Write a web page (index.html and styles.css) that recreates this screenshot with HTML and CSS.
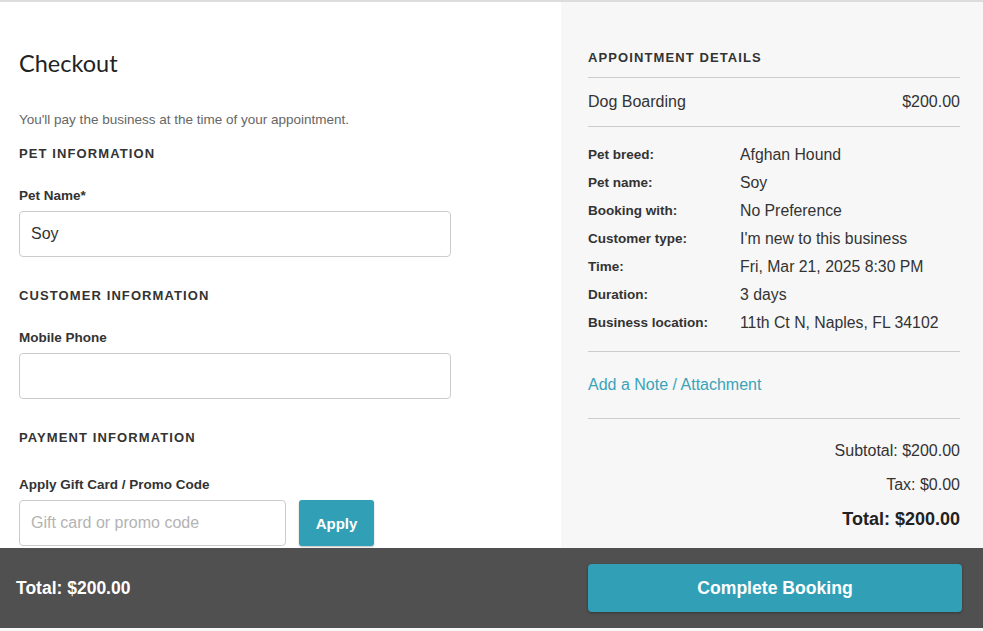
FILE: index.html
```html
<!DOCTYPE html>
<html lang="en">
<head>
<meta charset="utf-8">
<title>Checkout</title>
<link rel="stylesheet" href="styles.css">
</head>
<body>
<div class="page">
  <main class="main">
    <section class="form-col">
      <h1 class="title">Checkout</h1>
      <p class="note">You'll pay the business at the time of your appointment.</p>

      <h2 class="section-head first">PET INFORMATION</h2>
      <label class="field-label">Pet Name*</label>
      <div class="input wide"><span class="input-value">Soy</span></div>

      <h2 class="section-head">CUSTOMER INFORMATION</h2>
      <label class="field-label">Mobile Phone</label>
      <div class="input wide"></div>

      <h2 class="section-head">PAYMENT INFORMATION</h2>
      <label class="field-label promo-label">Apply Gift Card / Promo Code</label>
      <div class="promo-row">
        <div class="input promo"><span class="placeholder">Gift card or promo code</span></div>
        <button class="apply-btn">Apply</button>
      </div>
    </section>

    <aside class="summary-col">
      <h2 class="summary-head">APPOINTMENT DETAILS</h2>
      <div class="service-row">
        <span>Dog Boarding</span>
        <span>$200.00</span>
      </div>
      <dl class="details">
        <div class="detail"><dt>Pet breed:</dt><dd>Afghan Hound</dd></div>
        <div class="detail"><dt>Pet name:</dt><dd>Soy</dd></div>
        <div class="detail"><dt>Booking with:</dt><dd>No Preference</dd></div>
        <div class="detail"><dt>Customer type:</dt><dd>I'm new to this business</dd></div>
        <div class="detail"><dt>Time:</dt><dd>Fri, Mar 21, 2025 8:30 PM</dd></div>
        <div class="detail"><dt>Duration:</dt><dd>3 days</dd></div>
        <div class="detail"><dt>Business location:</dt><dd>11th Ct N, Naples, FL 34102</dd></div>
      </dl>
      <div class="note-row"><a class="note-link" href="#">Add a Note / Attachment</a></div>
      <div class="totals">
        <div class="total-line">Subtotal: $200.00</div>
        <div class="total-line">Tax: $0.00</div>
        <div class="total-line grand">Total: $200.00</div>
      </div>
    </aside>
  </main>

  <footer class="footer">
    <div class="footer-total">Total: $200.00</div>
    <button class="complete-btn">Complete Booking</button>
  </footer>
</div>
</body>
</html>
```

FILE: styles.css
```css
html, body {
  margin: 0;
  padding: 0;
}

body {
  background: #f7f7f7;
  font-family: "Liberation Sans", Arial, sans-serif;
  color: #333;
}

.page {
  height: 631px;
  display: flex;
  flex-direction: column;
  border-top: 2px solid #dcdcdc;
  box-sizing: border-box;
}

.main {
  flex: 1;
  display: flex;
  min-height: 0;
}

.form-col {
  width: 561px;
  background: #fff;
  padding: 48px 0 0 19px;
  box-sizing: border-box;
}

.title {
  margin: 0;
  font-family: "Lato", "Open Sans", sans-serif;
  font-weight: 400;
  font-size: 23.5px;
  line-height: 26px;
  color: #222;
}

.note {
  margin: 36px 0 0;
  font-size: 13.5px;
  line-height: 16px;
  color: #666;
}

.section-head {
  margin: 31px 0 0;
  font-size: 13px;
  line-height: 16px;
  font-weight: 700;
  letter-spacing: 1.1px;
  color: #333;
}

.section-head.first {
  margin-top: 18px;
}

.field-label {
  display: block;
  margin-top: 26px;
  font-size: 13.5px;
  line-height: 16px;
  font-weight: 700;
  color: #333;
}

.promo-label {
  margin-top: 31px;
}

.input {
  box-sizing: border-box;
  height: 46px;
  margin-top: 7px;
  border: 1px solid #cccccc;
  border-radius: 4px;
  background: #fff;
  display: flex;
  align-items: center;
  padding-left: 11px;
  font-size: 16px;
}

.input.wide {
  width: 432px;
}

.input-value {
  color: #333;
}

.promo-row {
  display: flex;
  gap: 13px;
  margin-top: 7px;
}

.promo-row .input {
  margin-top: 0;
}

.input.promo {
  width: 267px;
}

.placeholder {
  color: #b3b3b3;
}

.apply-btn {
  width: 75px;
  height: 46px;
  border: none;
  border-radius: 3px;
  background: #31a0b7;
  color: #fff;
  font-family: "Liberation Sans", Arial, sans-serif;
  font-weight: 700;
  font-size: 15px;
  box-shadow: 0 1px 2px rgba(0, 0, 0, 0.25);
  padding: 0;
}

.summary-col {
  flex: 1;
  background: #f7f7f7;
  padding: 48px 23px 0 27px;
  box-sizing: border-box;
}

.summary-head {
  margin: 0;
  padding-bottom: 11px;
  font-size: 13px;
  line-height: 16px;
  font-weight: 700;
  letter-spacing: 1.1px;
  color: #333;
  border-bottom: 1px solid #cccccc;
}

.service-row {
  display: flex;
  justify-content: space-between;
  padding: 15px 0 15px;
  font-size: 16px;
  line-height: 18px;
  color: #333;
  border-bottom: 1px solid #cccccc;
}

.details {
  margin: 0;
  padding: 14px 0 14px;
  border-bottom: 1px solid #cccccc;
}

.detail {
  display: flex;
  align-items: flex-start;
  height: 28px;
  line-height: 28px;
}

.detail dt {
  width: 152px;
  flex-shrink: 0;
  font-size: 13.5px;
  font-weight: 700;
  color: #333;
}

.detail dd {
  margin: 0;
  font-size: 15.8px;
  color: #333;
}

.note-row {
  padding: 24px 0 24px;
  line-height: 18px;
  border-bottom: 1px solid #cccccc;
}

.note-link {
  font-size: 16px;
  color: #3aa3b9;
  text-decoration: none;
}

.totals {
  padding-top: 15px;
  text-align: right;
}

.total-line {
  font-size: 16px;
  line-height: 34px;
  color: #333;
}

.total-line.grand {
  font-size: 18px;
  font-weight: 700;
  color: #222;
}

.footer {
  height: 80px;
  flex-shrink: 0;
  margin-bottom: 3px;
  background: #505050;
  display: flex;
  align-items: center;
  justify-content: space-between;
  padding: 0 21px 0 16px;
}

.footer-total {
  color: #fff;
  font-size: 17.5px;
  font-weight: 700;
}

.complete-btn {
  width: 374px;
  height: 48px;
  border: none;
  border-radius: 4px;
  background: #31a0b7;
  color: #fff;
  font-family: "Liberation Sans", Arial, sans-serif;
  font-size: 17.6px;
  font-weight: 700;
  box-shadow: 0 1px 3px rgba(0, 0, 0, 0.35);
  padding: 0;
}
```
